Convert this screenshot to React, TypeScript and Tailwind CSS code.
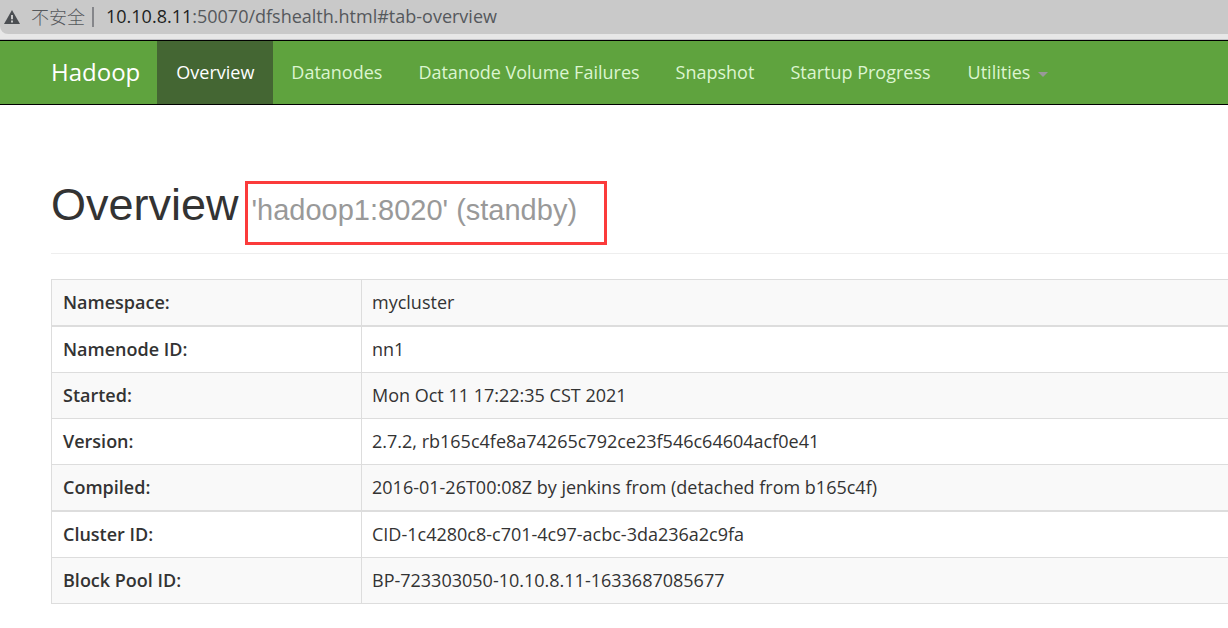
import { clsx } from "clsx";

const navItems = [
  { label: "Overview", href: "#tab-overview", active: true },
  { label: "Datanodes", href: "#tab-datanode" },
  { label: "Datanode Volume Failures", href: "#tab-datanode-volume-failures" },
  { label: "Snapshot", href: "#tab-snapshot" },
  { label: "Startup Progress", href: "#tab-startup-progress" },
];

const rows = [
  { name: "Namespace:", value: "mycluster", thick: true },
  { name: "Namenode ID:", value: "nn1" },
  { name: "Started:", value: "Mon Oct 11 17:22:35 CST 2021" },
  { name: "Version:", value: "2.7.2, rb165c4fe8a74265c792ce23f546c64604acf0e41" },
  { name: "Compiled:", value: "2016-01-26T00:08Z by jenkins from (detached from b165c4f)", thick: true },
  { name: "Cluster ID:", value: "CID-1c4280c8-c701-4c97-acbc-3da236a2c9fa" },
  { name: "Block Pool ID:", value: "BP-723303050-10.10.8.11-1633687085677" },
];

function AddressBar() {
  return (
    <div className="border-b border-[#c4c4c8] bg-[#e7e7e7] pb-[5px]">
      <div className="flex h-[34px] items-center rounded-bl-lg bg-[#c9c9c9] pb-0.5 pl-1 text-lg text-[#55585c]">
        <svg viewBox="0 0 16 14" className="mt-0.5 h-3.5 w-4 shrink-0" aria-hidden="true">
          <path d="M8 0 16 14H0Z" fill="#4b4e52" />
          <path d="M7 5h2v4.2H7zM7 10.4h2v2H7z" fill="#c9c9c9" />
        </svg>
        <span className="ml-[11px] font-['Noto_Sans_CJK_SC',sans-serif] font-light">不安全</span>
        <span className="ml-[7px] mt-0.5 h-5 w-0.5 bg-[#85868a]" />
        <span className="ml-3 whitespace-nowrap">
          <span className="text-[#1d1f22]">10.10.8.11</span>:50070/dfshealth.html#tab-overview
        </span>
      </div>
    </div>
  );
}

function NavBar() {
  return (
    <nav className="flex h-[65px] items-stretch whitespace-nowrap border-y border-black bg-[#5fa33e] pl-[51px] text-lg text-[#dcf5d0]">
      <a href="#" className="flex items-center pb-0.5 pr-[17px] text-2xl text-white">
        Hadoop
      </a>
      {navItems.map((item) => (
        <a
          key={item.label}
          href={item.href}
          className={clsx(
            "flex items-center pb-0.5",
            item.active ? "bg-[#446633] px-[19px] text-white" : "px-[18px]",
          )}
        >
          {item.label}
        </a>
      ))}
      <button type="button" className="flex items-center gap-2 px-[19px] pb-0.5">
        Utilities
        <svg viewBox="0 0 10 5" className="mt-1.5 h-[5px] w-2.5" aria-hidden="true">
          <path d="M0 0h10L5 5z" fill="#999" />
        </svg>
      </button>
    </nav>
  );
}

export default function App() {
  return (
    <div className="min-h-screen overflow-x-hidden bg-white font-['Open_Sans','Noto_Sans_CJK_SC',sans-serif] text-[#333]">
      <header>
        <AddressBar />
        <NavBar />
      </header>
      <main className="pl-[51px] pt-[75px]">
        <h1 className="flex items-baseline gap-1.5 border-b border-[#eee] pb-2 font-['Liberation_Sans',sans-serif] text-[45px] leading-[50px]">
          Overview
          <small className="border-3 border-[#fb3b3b] pb-[7px] pl-1 pr-[27px] pt-px text-[29px] leading-[50px] text-[#999]">
            'hadoop1:8020' (standby)
          </small>
        </h1>
        <table className="mt-[25px] w-full border-separate border-spacing-0 border-l border-t border-[#ddd] text-lg leading-6">
          <tbody>
            {rows.map((row) => (
              <tr key={row.name} className="odd:bg-[#f9f9f9]">
                <th
                  scope="row"
                  className={clsx(
                    "w-[310px] border-r border-[#ddd] px-[11px] pb-[11px] pt-2.5 text-left font-semibold",
                    row.thick ? "border-b-2" : "border-b",
                  )}
                >
                  {row.name}
                </th>
                <td className={clsx("border-[#ddd] px-2.5 pb-[11px] pt-2.5", row.thick ? "border-b-2" : "border-b")}>
                  {row.value}
                </td>
              </tr>
            ))}
          </tbody>
        </table>
      </main>
    </div>
  );
}
